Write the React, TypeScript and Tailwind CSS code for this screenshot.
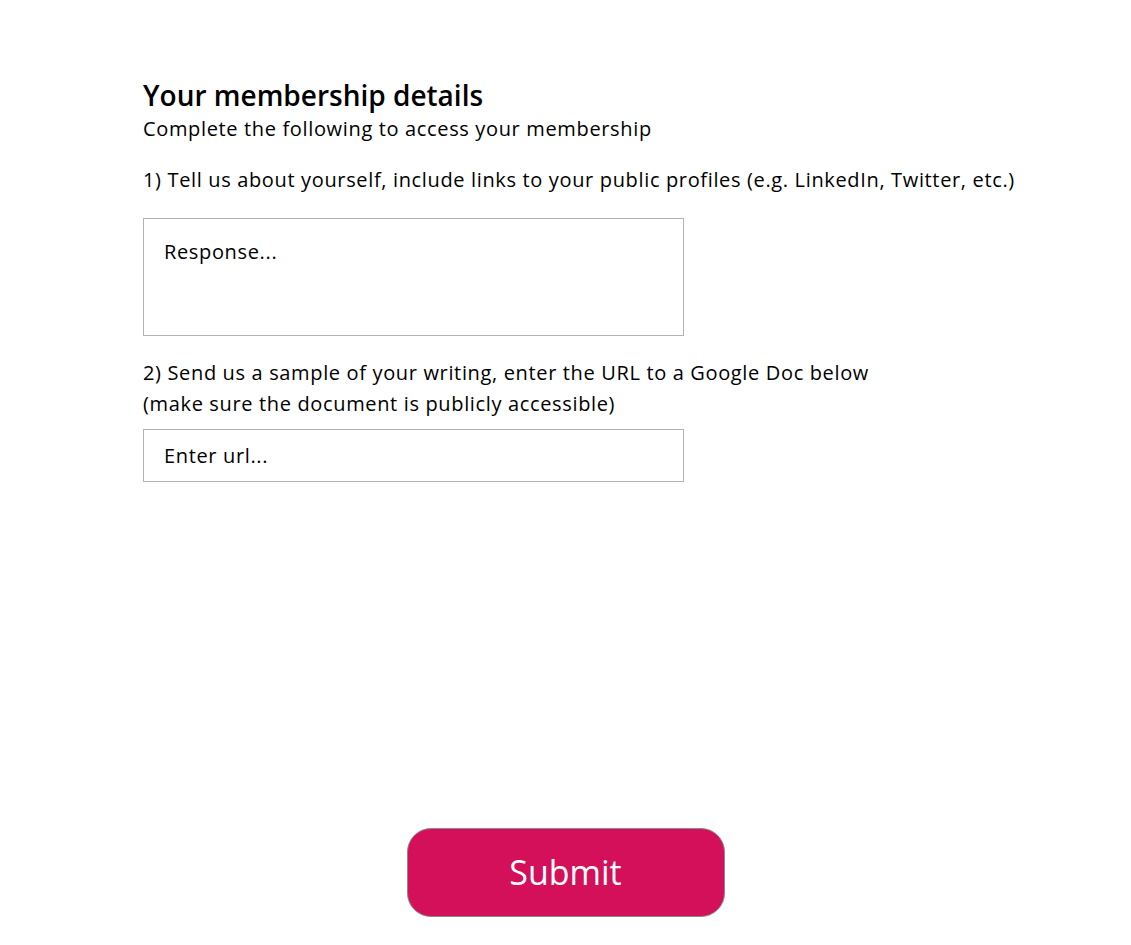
const App = () => {
  return (
    <div className="min-h-screen bg-white text-black font-['Open_Sans','Noto_Sans',sans-serif]">
      <div className="pl-[143px] pt-[78px] tracking-[0.65px]">
        <h1 className="text-[28px] leading-[34px] font-semibold tracking-normal">Your membership details</h1>
        <p className="mt-[3px] text-[20px] leading-[28px]">Complete the following to access your membership</p>

        <p className="mt-[23px] text-[20px] leading-[28px]">
          1) Tell us about yourself, include links to your public profiles (e.g. LinkedIn, Twitter, etc.)
        </p>
        <div className="mt-[24px] w-[541px] h-[118px] border border-[#b3b3b3] px-[20px] pt-[19px] text-[20px] leading-[28px]">
          Response...
        </div>

        <p className="mt-[21px] text-[20px] leading-[31px]">
          2) Send us a sample of your writing, enter the URL to a Google Doc below
          <br />
          (make sure the document is publicly accessible)
        </p>
        <div className="mt-[10px] w-[541px] h-[53px] border border-[#b3b3b3] px-[20px] flex items-center text-[20px]">
          Enter url...
        </div>
      </div>

      <div className="flex justify-center mt-[346px]">
        <button className="w-[318px] h-[89px] rounded-[24px] bg-[#d31059] border border-[#8a8a8a] text-white text-[34px] font-medium">
          Submit
        </button>
      </div>
    </div>
  )
}

export default App
